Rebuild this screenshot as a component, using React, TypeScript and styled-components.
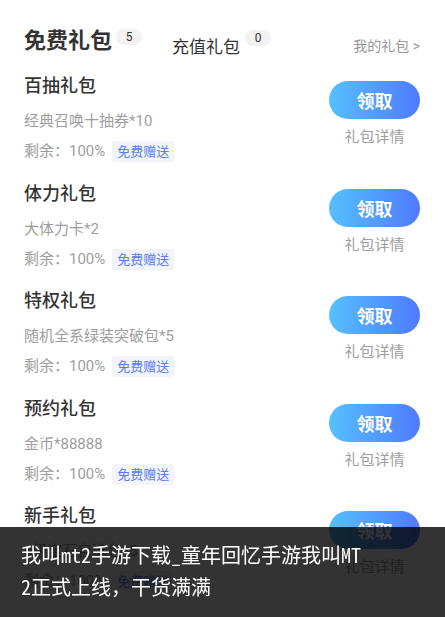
import React from "react";
import styled, { createGlobalStyle } from "styled-components";

const Global = createGlobalStyle`
  html, body { margin: 0; padding: 0; background: #fff; }
  body { font-family: Roboto, "Noto Sans CJK SC", "Noto Sans", sans-serif; color: #333; }
  * { box-sizing: border-box; }
`;

const Page = styled.div`
  padding: 0 25px 20px 24px;
`;

const Header = styled.div`
  display: flex;
  align-items: flex-start;
  height: 70px;
  padding-top: 26px;
`;

const Tab = styled.div<{ $active?: boolean }>`
  display: flex;
  align-items: flex-start;
  gap: ${(p) => (p.$active ? 4 : 5)}px;
  margin-top: ${(p) => (p.$active ? 0 : 4)}px;
  margin-right: ${(p) => (p.$active ? 30 : 0)}px;
`;

const TabText = styled.span<{ $active?: boolean }>`
  font-size: ${(p) => (p.$active ? 22 : 17)}px;
  line-height: ${(p) => (p.$active ? 30 : 34)}px;
  font-weight: ${(p) => (p.$active ? 700 : 400)};
  color: #333;
`;

const Badge = styled.span<{ $offset: number }>`
  margin-top: ${(p) => p.$offset}px;
  width: 26px;
  height: 16px;
  border-radius: 8px;
  background: #f2f2f2;
  color: #333;
  font-size: 12px;
  line-height: 16px;
  text-align: center;
`;

const MyLink = styled.span`
  margin-left: auto;
  margin-top: 10px;
  font-size: 14px;
  line-height: 20px;
  color: #999;
`;

const Item = styled.div`
  display: flex;
  justify-content: space-between;
  height: 107.5px;
  padding-top: 3px;
`;

const Info = styled.div`
  display: flex;
  flex-direction: column;
`;

const Title = styled.div`
  font-size: 18px;
  line-height: 26px;
  font-weight: 500;
  color: #333;
`;

const Desc = styled.div`
  margin-top: 12px;
  font-size: 15px;
  line-height: 20px;
  color: #9e9e9e;
`;

const Remain = styled.div`
  margin-top: 10px;
  display: flex;
  align-items: center;
  gap: 7px;
  font-size: 15px;
  line-height: 21px;
  color: #9e9e9e;
`;

const Tag = styled.span`
  height: 21px;
  padding: 0 5px;
  border-radius: 3px;
  background: #f3f4f8;
  color: #5a7df6;
  font-size: 13px;
  line-height: 21px;
`;

const Side = styled.div`
  display: flex;
  flex-direction: column;
  align-items: center;
  padding-top: 8px;
`;

const GetButton = styled.button`
  width: 91px;
  height: 38px;
  border: none;
  border-radius: 19px;
  background: linear-gradient(90deg, #56c0ff 0%, #4f7aff 100%);
  color: #fff;
  font-family: inherit;
  font-size: 18px;
  font-weight: 700;
  padding: 0;
`;

const Detail = styled.div`
  margin-top: 8px;
  font-size: 15px;
  line-height: 20px;
  color: #9e9e9e;
`;

const Overlay = styled.div`
  position: fixed;
  left: 0;
  right: 0;
  bottom: 0;
  height: 90px;
  background: rgba(0, 0, 0, 0.8);
  padding: 12px 21px 14px 21px;
`;

const OverlayText = styled.div`
  max-width: 345px;
  word-break: break-all;
  font-family: "Noto Sans Mono CJK SC", "Noto Sans CJK SC", "DejaVu Sans Mono", monospace;
  font-size: 20px;
  line-height: 32px;
  color: #fff;
`;

const gifts = [
  { title: "百抽礼包", desc: "经典召唤十抽券*10" },
  { title: "体力礼包", desc: "大体力卡*2" },
  { title: "特权礼包", desc: "随机全系绿装突破包*5" },
  { title: "预约礼包", desc: "金币*88888" },
  { title: "新手礼包", desc: "6级宝石自选包*5" },
];

export default function App() {
  return (
    <>
      <Global />
      <Page>
        <Header>
          <Tab $active>
            <TabText $active>免费礼包</TabText>
            <Badge $offset={3}>5</Badge>
          </Tab>
          <Tab>
            <TabText>充值礼包</TabText>
            <Badge $offset={0}>0</Badge>
          </Tab>
          <MyLink>我的礼包 &gt;</MyLink>
        </Header>
        {gifts.map((g) => (
          <Item key={g.title}>
            <Info>
              <Title>{g.title}</Title>
              <Desc>{g.desc}</Desc>
              <Remain>
                剩余：100%
                <Tag>免费赠送</Tag>
              </Remain>
            </Info>
            <Side>
              <GetButton>领取</GetButton>
              <Detail>礼包详情</Detail>
            </Side>
          </Item>
        ))}
      </Page>
      <Overlay>
        <OverlayText>我叫mt2手游下载_童年回忆手游我叫MT2正式上线，干货满满</OverlayText>
      </Overlay>
    </>
  );
}
